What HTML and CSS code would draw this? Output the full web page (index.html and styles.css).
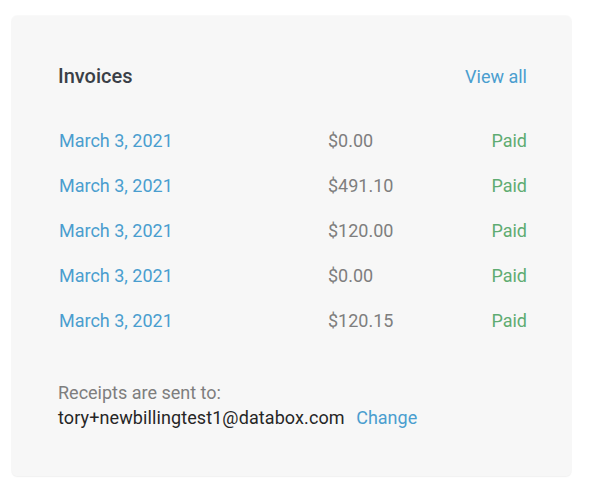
FILE: index.html
```html
<!DOCTYPE html>
<html lang="en">
<head>
    <meta charset="UTF-8">
    <meta name="viewport" content="width=device-width, initial-scale=1.0">
    <title>Invoices</title>
    <link rel="stylesheet" href="styles.css">
</head>
<body>
    <div class="card">
        <div class="card-header">
            <h2>Invoices</h2>
            <a href="#" class="link">View all</a>
        </div>
        <div class="invoice-list">
            <div class="invoice-row">
                <a href="#" class="link">March 3, 2021</a>
                <span class="amount">$0.00</span>
                <span class="status">Paid</span>
            </div>
            <div class="invoice-row">
                <a href="#" class="link">March 3, 2021</a>
                <span class="amount">$491.10</span>
                <span class="status">Paid</span>
            </div>
            <div class="invoice-row">
                <a href="#" class="link">March 3, 2021</a>
                <span class="amount">$120.00</span>
                <span class="status">Paid</span>
            </div>
            <div class="invoice-row">
                <a href="#" class="link">March 3, 2021</a>
                <span class="amount">$0.00</span>
                <span class="status">Paid</span>
            </div>
            <div class="invoice-row">
                <a href="#" class="link">March 3, 2021</a>
                <span class="amount">$120.15</span>
                <span class="status">Paid</span>
            </div>
        </div>
        <div class="receipts">
            <div class="receipts-label">Receipts are sent to:</div>
            <div class="receipts-email"><span class="email">tory+newbillingtest1@databox.com</span> <a href="#" class="link change">Change</a></div>
        </div>
    </div>
</body>
</html>
```

FILE: styles.css
```css
:root {
    --card-background: #F7F7F7;
    --title-color: #3A3F47;
    --link-color: #4A9ECF;
    --muted-color: #7E7E7E;
    --paid-color: #5FAC72;
    --text-color: #262626;
}
body {
    margin: 0;
    padding: 16px 18px 14px 12px;
    background-color: #FFFFFF;
    font-family: Roboto, 'Liberation Sans', sans-serif;
}
.card {
    background-color: var(--card-background);
    border-radius: 5px;
    box-shadow: 0 0 0 1px rgba(0,0,0,0.025), 0 1px 2px rgba(0,0,0,0.04);
    padding: 47px 44px 46px 46px;
    height: 460px;
    box-sizing: border-box;
}
.card-header {
    display: flex;
    justify-content: space-between;
    align-items: center;
    margin-bottom: 29px;
}
h2 {
    margin: 0;
    font-size: 20px;
    font-weight: 500;
    color: var(--title-color);
    line-height: 26px;
}
.link {
    color: var(--link-color);
    text-decoration: none;
    font-size: 18px;
}
.invoice-row {
    display: grid;
    grid-template-columns: 270px 1fr auto;
    align-items: center;
    height: 45px;
    font-size: 18px;
}
.invoice-row .link {
    padding-left: 1px;
}
.amount {
    color: var(--muted-color);
}
.status {
    color: var(--paid-color);
}
.receipts {
    margin-top: 37px;
    font-size: 18px;
    line-height: 25px;
}
.receipts-label {
    color: var(--muted-color);
}
.receipts-email {
    color: var(--text-color);
}
.email {
    letter-spacing: 0.1px;
}
.change {
    margin-left: 7px;
}
```
